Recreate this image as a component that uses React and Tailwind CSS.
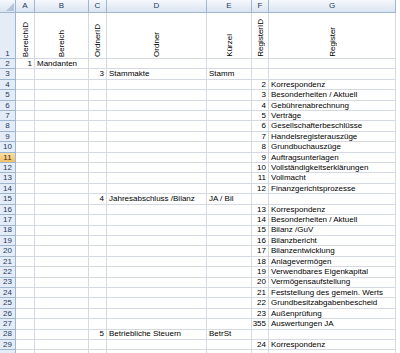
import React from 'react';

const cols = ['A', 'B', 'C', 'D', 'E', 'F', 'G'];
const widths = ['w-[19px]', 'w-[54px]', 'w-[18px]', 'w-[100px]', 'w-[45px]', 'w-[17px]', 'w-[127px]'];
const headers = ['BereichID', 'Bereich', 'OrdnerID', 'Ordner', 'Kürzel', 'RegisterID', 'Register'];

// one entry per sheet row from row 2 on: [A, B, C, D, E, F, G]
const rows = [
  ['1', 'Mandanten'],
  ['', '', '3', 'Stammakte', 'Stamm'],
  ['', '', '', '', '', '2', 'Korrespondenz'],
  ['', '', '', '', '', '3', 'Besonderheiten / Aktuell'],
  ['', '', '', '', '', '4', 'Gebührenabrechnung'],
  ['', '', '', '', '', '5', 'Verträge'],
  ['', '', '', '', '', '6', 'Gesellschafterbeschlüsse'],
  ['', '', '', '', '', '7', 'Handelsregisterauszüge'],
  ['', '', '', '', '', '8', 'Grundbuchauszüge'],
  ['', '', '', '', '', '9', 'Auftragsunterlagen'],
  ['', '', '', '', '', '10', 'Vollständigkeitserklärungen'],
  ['', '', '', '', '', '11', 'Vollmacht'],
  ['', '', '', '', '', '12', 'Finanzgerichtsprozesse'],
  ['', '', '4', 'Jahresabschluss /Bilanz', 'JA / Bil'],
  ['', '', '', '', '', '13', 'Korrespondenz'],
  ['', '', '', '', '', '14', 'Besonderheiten / Aktuell'],
  ['', '', '', '', '', '15', 'Bilanz /GuV'],
  ['', '', '', '', '', '16', 'Bilanzbericht'],
  ['', '', '', '', '', '17', 'Bilanzentwicklung'],
  ['', '', '', '', '', '18', 'Anlagevermögen'],
  ['', '', '', '', '', '19', 'Verwendbares Eigenkapital'],
  ['', '', '', '', '', '20', 'Vermögensaufstellung'],
  ['', '', '', '', '', '21', 'Feststellung des gemein. Werts'],
  ['', '', '', '', '', '22', 'Grundbesitzabgabenbescheid'],
  ['', '', '', '', '', '23', 'Außenprüfung'],
  ['', '', '', '', '', '355', 'Auswertungen JA'],
  ['', '', '5', 'Betriebliche Steuern', 'BetrSt'],
  ['', '', '', '', '', '24', 'Korrespondenz'],
];

const numericCols = [0, 2, 5];

function RowHeader({ n }) {
  const active = n === 11;
  return (
    <div
      className={`w-[16px] shrink-0 h-full flex items-end justify-center border-r border-b border-[#9eb6ce] text-[8px] leading-[9.5px] ${
        active ? 'bg-gradient-to-b from-[#f9dea4] to-[#f1c15f] text-[#3b2d10]' : 'bg-[#e4ecf7] text-[#243b5c]'
      }`}
    >
      {n}
    </div>
  );
}

export default function App() {
  return (
    <div className="w-[400px] h-[353px] overflow-hidden bg-white font-['Liberation_Sans',Arial,sans-serif] text-black">
      {/* column letters */}
      <div className="flex h-[13px] w-[396px]">
        <div className="w-[16px] shrink-0 relative border-r border-b border-[#9eb6ce] bg-gradient-to-b from-[#f5f8fc] to-[#dae4f1]">
          <svg className="absolute right-[1px] bottom-[1px]" width="8" height="8" viewBox="0 0 8 8">
            <polygon points="8,0 8,8 0,8" fill="#b4c3d6" />
          </svg>
        </div>
        {cols.map((c, i) => (
          <div
            key={c}
            className={`${widths[i]} shrink-0 flex items-center justify-center border-r border-b border-[#9eb6ce] bg-gradient-to-b from-[#f5f8fc] to-[#dae4f1] text-[8px] text-[#243b5c]`}
          >
            {c}
          </div>
        ))}
      </div>

      {/* row 1: rotated headers */}
      <div className="flex h-[46px] w-[396px]">
        <RowHeader n={1} />
        {headers.map((h, i) => (
          <div
            key={h}
            className={`${widths[i]} shrink-0 flex items-end justify-center pb-[1px] border-r border-b border-[#d4d9e3]`}
          >
            <span className="[writing-mode:vertical-rl] rotate-180 text-[8px] leading-[9px] whitespace-nowrap">{h}</span>
          </div>
        ))}
      </div>

      {rows.map((r, ri) => (
        <div key={ri} className="flex h-[10.41px] w-[396px]">
          <RowHeader n={ri + 2} />
          {cols.map((c, ci) => {
            const v = r[ci] || '';
            const num = numericCols.includes(ci);
            return (
              <div
                key={c}
                className={`${widths[ci]} shrink-0 h-full flex items-end border-r border-b border-[#d4d9e3] text-[8px] leading-[9.5px] whitespace-nowrap overflow-visible ${
                  num ? 'justify-end pr-[2px]' : 'justify-start pl-[2px]'
                }`}
              >
                {v}
              </div>
            );
          })}
        </div>
      ))}

      {/* sliver of the next row at the bottom edge */}
      <div className="flex h-[10.41px] w-[396px]">
        <div className="w-[16px] shrink-0 h-full border-r border-[#9eb6ce] bg-[#e4ecf7]" />
        {widths.map((w, i) => (
          <div key={i} className={`${w} shrink-0 h-full border-r border-[#d4d9e3]`} />
        ))}
      </div>
    </div>
  );
}
